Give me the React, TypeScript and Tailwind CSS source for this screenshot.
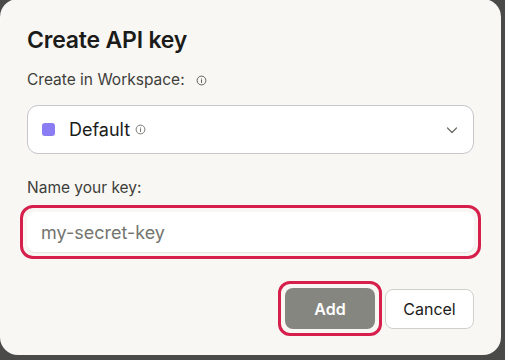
import React from 'react';

const InfoIcon: React.FC<{ className?: string }> = ({ className }) => (
  <svg className={className} viewBox="0 0 12 12" fill="none" stroke="currentColor" strokeWidth={1}>
    <circle cx="6" cy="6" r="4.8" />
    <path d="M6 5.2v3" strokeLinecap="round" />
    <circle cx="6" cy="3.7" r="0.45" fill="currentColor" stroke="none" />
  </svg>
);

const App: React.FC = () => {
  return (
    <div className="w-[505px] h-[360px] bg-[#4a4a48] overflow-hidden" style={{ fontFamily: 'Inter, "Noto Sans", sans-serif' }}>
      <div className="w-[501px] h-[356px] -mt-[1px] rounded-[18px] bg-[#f8f7f4] px-[27px] pt-[27px] flex flex-col">
        <h1 className="text-[23px] leading-[28px] font-semibold tracking-[-0.2px] text-[#1b1b19]">Create API key</h1>

        <div className="mt-[17px] flex items-center gap-[11px] text-[15.5px] leading-[18px] text-[#3e3e3a]">
          <span>Create in Workspace:</span>
          <InfoIcon className="w-[11px] h-[11px] text-[#55554f]" />
        </div>

        <button className="mt-[16px] h-[49px] w-full rounded-[11px] border border-[#c6c6cc] bg-white flex items-center pl-[14px] pr-[14px]">
          <span className="w-[13px] h-[13px] rounded-[3px] bg-[#8a7cf2]" />
          <span className="ml-[14px] text-[18px] text-[#1b1b19]">Default</span>
          <InfoIcon className="ml-[5px] w-[11px] h-[11px] text-[#6a6a66]" />
          <svg className="ml-auto w-[14px] h-[14px] text-[#6a6a66]" viewBox="0 0 14 14" fill="none" stroke="currentColor" strokeWidth={1.2} strokeLinecap="round" strokeLinejoin="round">
            <path d="M2.5 5l4.5 4.5L11.5 5" />
          </svg>
        </button>

        <div className="mt-[25px] text-[15.5px] leading-[18px] text-[#3e3e3a]">Name your key:</div>

        <div className="mt-[8px] -mx-[7px] rounded-[13px] border-[3px] border-[#d61f4b] p-[4px]">
          <input
            className="w-full h-[40px] rounded-[8px] bg-white px-[14px] text-[18px] text-[#1b1b19] placeholder:text-[#75756f] outline-none shadow-[0_1px_1px_rgba(0,0,0,0.08)]"
            placeholder="my-secret-key"
          />
        </div>

        <div className="mt-[22px] flex items-center justify-end gap-[3px]">
          <div className="rounded-[12px] border-[3px] border-[#d61f4b] p-[4px]">
            <button className="w-[90px] h-[41px] rounded-[8px] bg-[#868681] text-white text-[16px] font-semibold">Add</button>
          </div>
          <button className="w-[89px] h-[40px] rounded-[8px] border border-[#cfcfcc] bg-white text-[16px] text-[#1b1b19]">Cancel</button>
        </div>
      </div>
    </div>
  );
};

export default App;
